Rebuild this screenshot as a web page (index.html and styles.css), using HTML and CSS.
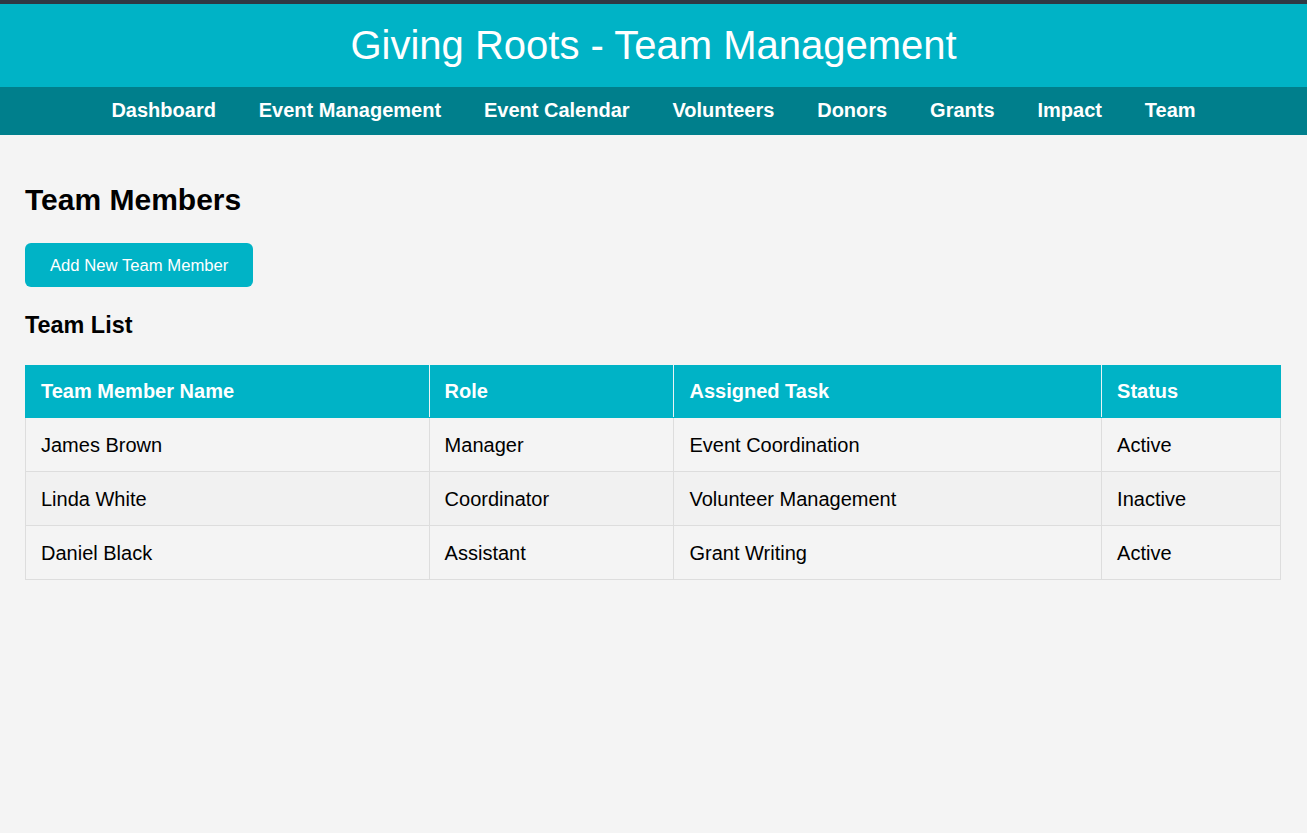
FILE: index.html
```html
<!DOCTYPE html>
<html lang="en">
<head>
<meta charset="utf-8">
<title>Giving Roots - Team Management</title>
<link rel="stylesheet" href="styles.css">
</head>
<body>
<div class="topstrip"></div>
<header class="site-header">
  <h1>Giving Roots - Team Management</h1>
</header>
<nav class="site-nav">
  <a href="#">Dashboard</a>
  <a href="#">Event Management</a>
  <a href="#">Event Calendar</a>
  <a href="#">Volunteers</a>
  <a href="#">Donors</a>
  <a href="#">Grants</a>
  <a href="#">Impact</a>
  <a href="#">Team</a>
</nav>
<main class="content">
  <h2 class="page-title">Team Members</h2>
  <button class="btn-add">Add New Team Member</button>
  <h3 class="section-title">Team List</h3>
  <table class="team-table">
    <thead>
      <tr>
        <th class="col-name">Team Member Name</th>
        <th class="col-role">Role</th>
        <th class="col-task">Assigned Task</th>
        <th class="col-status">Status</th>
      </tr>
    </thead>
    <tbody>
      <tr><td>James Brown</td><td>Manager</td><td>Event Coordination</td><td>Active</td></tr>
      <tr><td>Linda White</td><td>Coordinator</td><td>Volunteer Management</td><td>Inactive</td></tr>
      <tr><td>Daniel Black</td><td>Assistant</td><td>Grant Writing</td><td>Active</td></tr>
    </tbody>
  </table>
</main>
</body>
</html>
```
FILE: styles.css
```css
* { box-sizing: border-box; }
html, body { margin: 0; padding: 0; }
body {
  background: #f4f4f4;
  font-family: "Liberation Sans", Arial, sans-serif;
  color: #000;
  min-height: 833px;
}
.topstrip {
  height: 4px;
  background: #2f3944;
}
.site-header {
  background: #00b3c6;
  height: 83px;
  display: flex;
  align-items: center;
  justify-content: center;
}
.site-header h1 {
  margin: 0;
  font-size: 40px;
  font-weight: normal;
  color: #fff;
  line-height: 46px;
  position: relative;
  top: -1px;
}
.site-nav {
  background: #007f8c;
  height: 48px;
  display: flex;
  align-items: center;
  justify-content: center;
  gap: 42.9px;
}
.site-nav a {
  color: #fff;
  text-decoration: none;
  font-weight: bold;
  font-size: 20px;
  line-height: 23px;
  position: relative;
  top: -1px;
}
.content {
  padding: 20px 25px 25px 25px;
}
.page-title {
  margin: 27px 0 0 0;
  font-size: 30px;
  line-height: 35px;
  font-weight: bold;
}
.btn-add {
  display: block;
  margin-top: 26px;
  background: #00b3c6;
  color: #fff;
  border: none;
  border-radius: 6px;
  font-family: "Liberation Sans", Arial, sans-serif;
  font-size: 16.67px;
  line-height: 19px;
  padding: 12.5px 25px;
  height: 44px;
  cursor: pointer;
}
.section-title {
  margin: 25px 0 0 0;
  font-size: 23.4px;
  line-height: 27px;
  font-weight: bold;
}
.team-table {
  margin-top: 26px;
  width: 1256px;
  border-collapse: collapse;
  font-size: 20px;
}
.team-table th,
.team-table td {
  text-align: left;
  padding: 15px 15px;
  line-height: 23px;
  border: 1px solid #dddddd;
}
.team-table th {
  background: #00b3c6;
  color: #fff;
  font-weight: bold;
  border-color: #e9f4f5;
  border-top-color: #00b3c6;
  border-bottom-color: #00b3c6;
  height: 52px;
  padding-top: 14px;
  padding-bottom: 14px;
}
.team-table th:first-child { border-left-color: #00b3c6; }
.team-table th:last-child { border-right-color: #00b3c6; }
.team-table td {
  height: 54px;
  padding-top: 16px;
  padding-bottom: 14px;
}
.team-table tbody tr:nth-child(even) { background: #f1f1f1; }
.col-name { width: 404px; }
.col-role { width: 245px; }
.col-task { width: 428px; }
.col-status { width: 179px; }
```
